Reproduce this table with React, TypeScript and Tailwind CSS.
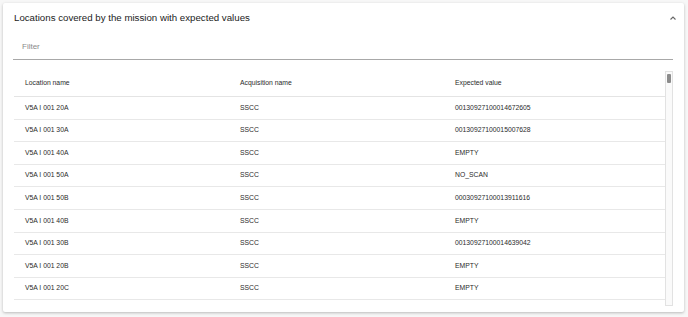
import React from "react";

const rows: [string, string, string][] = [
  ["V5A I 001 20A", "SSCC", "00130927100014672605"],
  ["V5A I 001 30A", "SSCC", "00130927100015007628"],
  ["V5A I 001 40A", "SSCC", "EMPTY"],
  ["V5A I 001 50A", "SSCC", "NO_SCAN"],
  ["V5A I 001 50B", "SSCC", "00030927100013911616"],
  ["V5A I 001 40B", "SSCC", "EMPTY"],
  ["V5A I 001 30B", "SSCC", "00130927100014639042"],
  ["V5A I 001 20B", "SSCC", "EMPTY"],
  ["V5A I 001 20C", "SSCC", "EMPTY"],
];

export default function App() {
  return (
    <div
      className="w-[688px] h-[317px] bg-[#f7f7f7] pt-[3px] pl-[3px] overflow-hidden"
      style={{ fontFamily: "'Liberation Sans', Arial, sans-serif" }}
    >
      <div className="w-[681px] h-[309px] bg-white rounded-[2px] shadow-[0_1px_3px_rgba(0,0,0,0.25)] flex flex-col">
        <div className="h-[30px] flex items-center justify-between pl-[11px] pr-[7px]">
          <span className="text-[9.7px] text-[#222]">
            Locations covered by the mission with expected values
          </span>
          <svg width="8" height="6" viewBox="0 0 8 6" className="mt-[-1px]">
            <path d="M1.5 4.5 L4 2 L6.5 4.5" fill="none" stroke="#666" strokeWidth="1.1" />
          </svg>
        </div>
        <div className="ml-[10px] mr-[11px] h-[27px] border-b border-[#a8a8a8] flex items-center pl-[9px] pt-[2px]">
          <span className="text-[8px] text-[#8a8a8a]">Filter</span>
        </div>
        <div className="ml-[11px] mr-[11px] mt-[11px] h-[235px] flex">
          <div className="flex-1 overflow-hidden">
            <div className="h-[26px] grid grid-cols-[215px_215px_1fr] items-center border-b border-[#e4e4e4] text-[6.8px] text-[#2a2a2a]">
              <span className="pl-[11px]">Location name</span>
              <span className="pl-[11px]">Acquisition name</span>
              <span className="pl-[11px]">Expected value</span>
            </div>
            {rows.map((r, i) => (
              <div
                key={i}
                className="h-[22.6px] grid grid-cols-[215px_215px_1fr] items-center border-b border-[#e8e8e8] text-[6.8px] text-[#2a2a2a]"
              >
                <span className="pl-[11px]">{r[0]}</span>
                <span className="pl-[11px]">{r[1]}</span>
                <span className="pl-[11px]">{r[2]}</span>
              </div>
            ))}
          </div>
          <div className="w-[8px] border border-[#e2e2e2] bg-[#fafafa] flex justify-center pt-[2px]">
            <div className="w-[4px] h-[9px] bg-[#8c8c8c] rounded-[1px]" />
          </div>
        </div>
      </div>
    </div>
  );
}
